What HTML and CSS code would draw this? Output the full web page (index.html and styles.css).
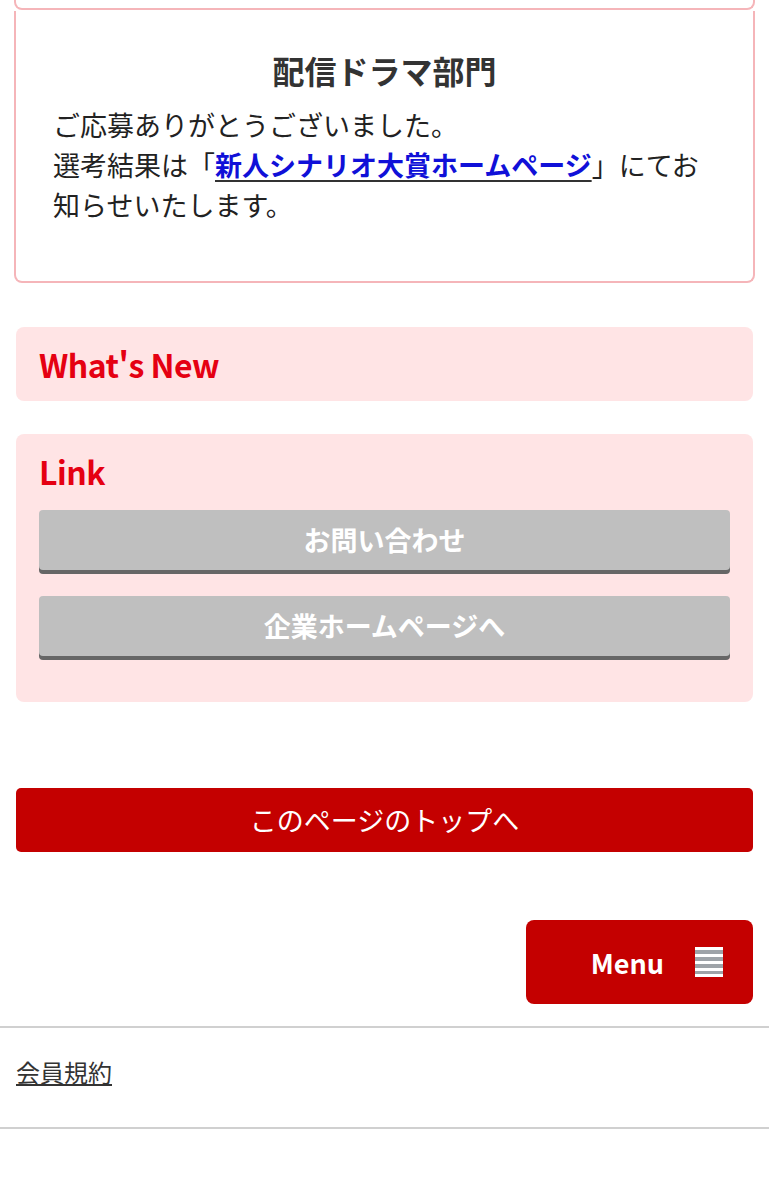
FILE: index.html
```html
<!DOCTYPE html>
<html lang="ja">
<head>
    <meta charset="UTF-8">
    <meta name="viewport" content="width=device-width, initial-scale=1.0">
    <title>応募完了</title>
    <link rel="stylesheet" href="styles.css">
</head>
<body>
    <div class="main">
        <!-- 前のセクションの下端 -->
        <div class="entry-box entry-box-prev"></div>

        <div class="entry-box">
            <h2 class="entry-title">配信ドラマ部門</h2>
            <p class="entry-text">
                ご応募ありがとうございました。<br>
                選考結果は「<a href="#" class="entry-link">新人シナリオ大賞ホームページ</a>」にてお知らせいたします。
            </p>
        </div>

        <div class="side-box">
            <h3 class="side-title">What's New</h3>
        </div>

        <div class="side-box side-box-link">
            <h3 class="side-title">Link</h3>
            <a href="#" class="gray-btn">お問い合わせ</a>
            <a href="#" class="gray-btn">企業ホームページへ</a>
        </div>

        <a href="#" class="page-top">このページのトップへ</a>

        <div class="menu-row">
            <button class="menu-btn">
                <span class="menu-label">Menu</span>
                <span class="menu-icon"></span>
            </button>
        </div>
    </div>

    <footer class="footer">
        <a href="#" class="footer-link">会員規約</a>
    </footer>
</body>
</html>
```

FILE: styles.css
```css
body {
    margin: 0;
    font-family: "Noto Sans CJK JP", "Noto Sans", sans-serif;
    color: #222;
    background: #fff;
}

a {
    text-decoration: none;
}

.main {
    padding: 0 16px;
}

.entry-box {
    margin: 0 -2px;
    border: 2px solid #f5b5b9;
    border-top: none;
    border-radius: 0 0 8px 8px;
    padding: 39px 30px 56px 37px;
}

.entry-box-prev {
    height: 8px;
    padding: 0;
    margin-bottom: 1px;
}

.entry-title {
    margin: 0 0 0 -7px;
    font-size: 32px;
    line-height: 40px;
    font-weight: 700;
    color: #333;
    text-align: center;
}

.entry-text {
    margin: 15px 0 0;
    font-size: 27px;
    line-height: 40px;
}

.entry-link {
    color: #1010d8;
    font-weight: 700;
    text-decoration: underline;
    text-decoration-color: #333;
    text-underline-offset: 4px;
}

.side-box {
    background: #ffe4e5;
    border-radius: 8px;
    padding: 18px 23px;
    margin-top: 44px;
}

.side-box-link {
    margin-top: 33px;
    padding-bottom: 46px;
}

.side-title {
    margin: 0;
    font-size: 32px;
    line-height: 38px;
    font-weight: 700;
    color: #e50012;
    letter-spacing: -0.5px;
}

.gray-btn {
    display: block;
    margin-top: 20px;
    height: 60px;
    line-height: 60px;
    background: #bfbfbf;
    border-radius: 4px;
    box-shadow: 0 4px 0 #666;
    color: #fff;
    font-size: 27px;
    font-weight: 700;
    text-align: center;
}

.gray-btn + .gray-btn {
    margin-top: 26px;
}

.page-top {
    display: block;
    margin-top: 86px;
    height: 64px;
    line-height: 64px;
    background: #c40000;
    border-radius: 5px;
    color: #fff;
    font-size: 27px;
    text-align: center;
}

.menu-row {
    display: flex;
    justify-content: flex-end;
    margin-top: 68px;
    padding-bottom: 22px;
}

.menu-btn {
    display: flex;
    align-items: center;
    justify-content: flex-end;
    gap: 31px;
    width: 227px;
    height: 84px;
    padding: 0 30px 0 0;
    border: none;
    border-radius: 8px;
    background: #c40000;
    color: #fff;
    font-family: inherit;
    font-size: 27px;
    font-weight: 700;
}

.menu-icon {
    display: block;
    width: 28px;
    height: 30px;
    background: repeating-linear-gradient(#fff 0, #fff 3px, #9ea3a8 3px, #9ea3a8 7px);
    border-bottom: 3px solid #fff;
    box-sizing: border-box;
}

.footer {
    border-top: 2px solid #d0d0d0;
    border-bottom: 2px solid #d0d0d0;
    padding: 26px 16px 37px;
}

.footer-link {
    font-size: 24px;
    line-height: 36px;
    color: #333;
    text-decoration: underline;
}
```
